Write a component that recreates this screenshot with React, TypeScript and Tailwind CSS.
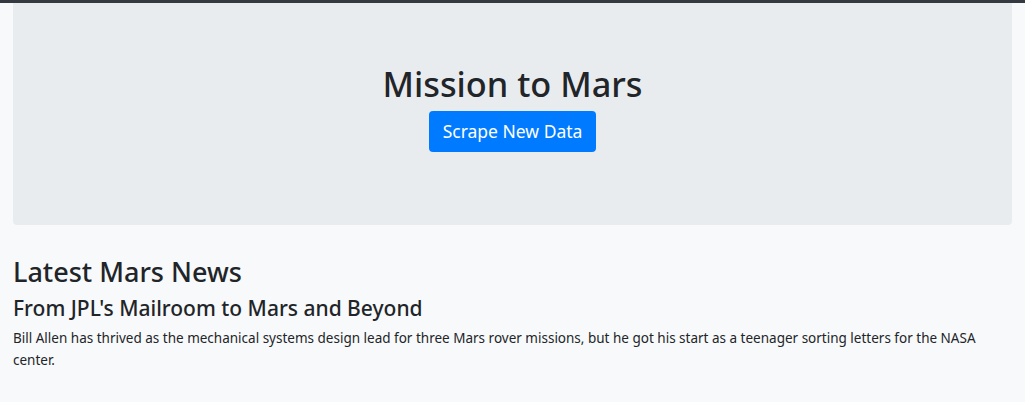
export default function App() {
  return (
    <div className="min-h-[402px] bg-[#f8f9fa] text-[#212529]" style={{ fontFamily: '"Noto Sans", "Open Sans", sans-serif' }}>
      <div className="h-[3px] bg-[#343a40]" />
      <div className="px-[13px]">
        <div className="bg-[#e9ecef] rounded-b-[4px] pt-[60px] pb-[73px] flex flex-col items-center">
          <h1 className="text-[34.3px] leading-[42px] font-medium">Mission to Mars</h1>
          <button className="mt-[6px] bg-[#007bff] text-white text-[17.5px] leading-[25px] px-[14px] py-[8px] rounded-[4px]">
            Scrape New Data
          </button>
        </div>
        <div className="pt-[30px]">
          <h2 className="text-[27px] leading-[34px] font-medium">Latest Mars News</h2>
          <h4 className="mt-[7px] text-[21px] leading-[25px] font-medium">From JPL's Mailroom to Mars and Beyond</h4>
          <p className="mt-[6px] text-[13.5px] leading-[22px]">
            Bill Allen has thrived as the mechanical systems design lead for three Mars rover missions, but he got his start as a teenager sorting letters for the NASA center.
          </p>
        </div>
      </div>
    </div>
  );
}
